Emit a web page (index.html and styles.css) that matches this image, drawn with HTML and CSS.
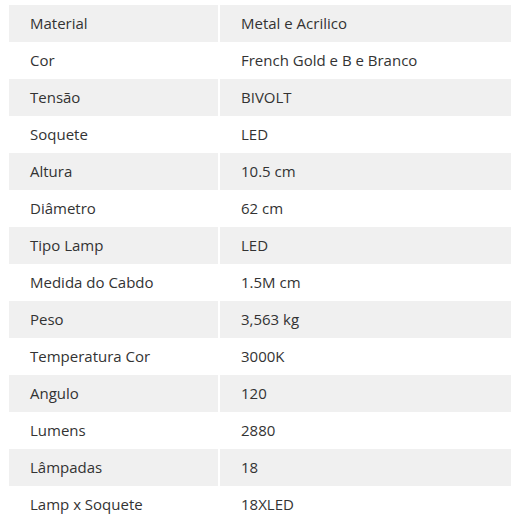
FILE: index.html
```html
<!DOCTYPE html>
<html lang="pt">
<head>
<meta charset="utf-8">
<link rel="stylesheet" href="styles.css">
</head>
<body>
<table class="specs">
  <tbody>
    <tr><td class="label">Material</td><td class="value">Metal e Acrilico</td></tr>
    <tr><td class="label">Cor</td><td class="value">French Gold e B e Branco</td></tr>
    <tr><td class="label">Tensão</td><td class="value">BIVOLT</td></tr>
    <tr><td class="label">Soquete</td><td class="value">LED</td></tr>
    <tr><td class="label">Altura</td><td class="value">10.5 cm</td></tr>
    <tr><td class="label">Diâmetro</td><td class="value">62 cm</td></tr>
    <tr><td class="label">Tipo Lamp</td><td class="value">LED</td></tr>
    <tr><td class="label">Medida do Cabdo</td><td class="value">1.5M cm</td></tr>
    <tr><td class="label">Peso</td><td class="value">3,563 kg</td></tr>
    <tr><td class="label">Temperatura Cor</td><td class="value">3000K</td></tr>
    <tr><td class="label">Angulo</td><td class="value">120</td></tr>
    <tr><td class="label">Lumens</td><td class="value">2880</td></tr>
    <tr><td class="label">Lâmpadas</td><td class="value">18</td></tr>
    <tr><td class="label">Lamp x Soquete</td><td class="value">18XLED</td></tr>
  </tbody>
</table>
</body>
</html>
```
FILE: styles.css
```css
html, body {
  margin: 0;
  padding: 0;
  background: #ffffff;
}
body {
  padding: 5px 9px 0 9px;
  font-family: "Open Sans", "Lato", sans-serif;
  font-size: 15px;
  color: #333333;
}
.specs {
  width: 502px;
  border-collapse: separate;
  border-spacing: 0;
  table-layout: fixed;
}
.specs td {
  height: 37px;
  padding: 0 0 0 21px;
  box-sizing: border-box;
  vertical-align: middle;
  line-height: 1;
}
.specs .label {
  width: 211px;
  border-right: 2px solid #ffffff;
}
.specs tr:nth-child(odd) td {
  background: #f0f0f0;
}
```
